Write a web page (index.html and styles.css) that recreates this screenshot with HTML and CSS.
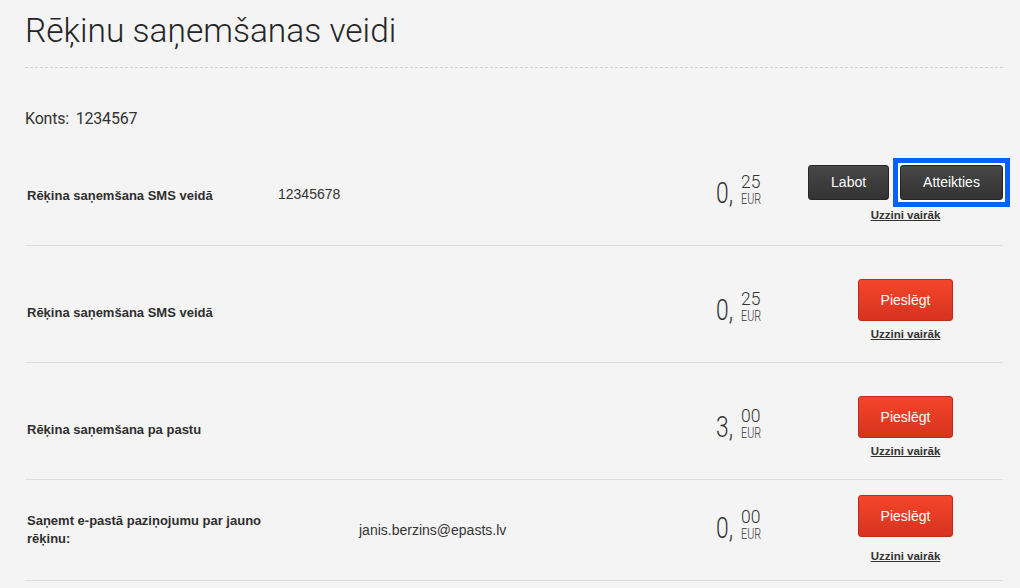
FILE: index.html
```html
<!DOCTYPE html>
<html lang="lv">
<head>
<meta charset="utf-8">
<title>Rēķinu saņemšanas veidi</title>
<link rel="stylesheet" href="styles.css">
</head>
<body>
<div class="page">
  <h1 class="title">Rēķinu saņemšanas veidi</h1>
  <div class="account">Konts: 1234567</div>

  <div class="row row--first">
    <div class="info">
      <div class="label">Rēķina saņemšana SMS veidā</div>
      <div class="value">12345678</div>
    </div>
    <div class="price">
      <span class="int">0,</span>
      <span class="frac"><span class="cents">25</span><span class="cur">EUR</span></span>
    </div>
    <div class="actions">
      <div class="btns">
        <button class="btn btn--dark">Labot</button>
        <span class="focus-ring"><button class="btn btn--dark">Atteikties</button></span>
      </div>
      <a class="more" href="#">Uzzini vairāk</a>
    </div>
  </div>

  <div class="row">
    <div class="info">
      <div class="label">Rēķina saņemšana SMS veidā</div>
    </div>
    <div class="price">
      <span class="int">0,</span>
      <span class="frac"><span class="cents">25</span><span class="cur">EUR</span></span>
    </div>
    <div class="actions">
      <div class="btns"><button class="btn btn--red">Pieslēgt</button></div>
      <a class="more" href="#">Uzzini vairāk</a>
    </div>
  </div>

  <div class="row">
    <div class="info">
      <div class="label">Rēķina saņemšana pa pastu</div>
    </div>
    <div class="price">
      <span class="int">3,</span>
      <span class="frac"><span class="cents">00</span><span class="cur">EUR</span></span>
    </div>
    <div class="actions">
      <div class="btns"><button class="btn btn--red">Pieslēgt</button></div>
      <a class="more" href="#">Uzzini vairāk</a>
    </div>
  </div>

  <div class="row row--email">
    <div class="info">
      <div class="label">Saņemt e-pastā paziņojumu par jauno rēķinu:</div>
      <div class="value">janis.berzins@epasts.lv</div>
    </div>
    <div class="price">
      <span class="int">0,</span>
      <span class="frac"><span class="cents">00</span><span class="cur">EUR</span></span>
    </div>
    <div class="actions">
      <div class="btns"><button class="btn btn--red">Pieslēgt</button></div>
      <a class="more" href="#">Uzzini vairāk</a>
    </div>
  </div>
</div>
</body>
</html>
```

FILE: styles.css
```css
* { box-sizing: border-box; }

html, body {
  margin: 0;
  padding: 0;
  background: #f4f4f4;
  color: #333;
  font-family: "Liberation Sans", Arial, sans-serif;
}

.page {
  width: 978px;
  margin-left: 25px;
}

.title {
  margin: 12px 0 0;
  padding-bottom: 16px;
  font-family: Roboto, "Liberation Sans", sans-serif;
  font-weight: 300;
  font-size: 33.5px;
  line-height: 38.7px;
  color: #262626;
  border-bottom: 1px dashed #d2d2d2;
}

.account {
  margin-top: 41px;
  font-family: Roboto, "Liberation Sans", sans-serif;
  font-size: 16px;
  line-height: 19px;
  letter-spacing: -0.2px;
  word-spacing: 3px;
  color: #333;
}

.row {
  display: flex;
  align-items: flex-start;
  height: 117px;
  border-bottom: 1px solid #dedede;
}

.row--first { margin-top: 1px; }

.row--email { height: 101px; }

.info {
  flex: 1;
  display: flex;
  align-items: flex-start;
}

.label {
  width: 253px;
  padding-left: 2px;
  margin-top: 58px;
  font-weight: bold;
  font-size: 13px;
  line-height: 18px;
  color: #2f2f2f;
}

.value {
  margin-top: 56px;
  font-size: 14px;
  line-height: 18px;
  color: #333;
}

.row--email .label {
  width: 247px;
  margin-right: 87px;
  margin-top: 32px;
}

.row--email .value { margin-top: 41px; }

.price {
  width: 45px;
  margin-right: 47px;
  margin-top: 45px;
  display: flex;
  align-items: flex-start;
  font-family: Roboto, "Liberation Sans", sans-serif;
  color: #333;
}

.row--email .price { margin-top: 29px; }

.int {
  display: inline-block;
  width: 17px;
  margin-top: 4px;
  margin-right: 8px;
  font-size: 30px;
  line-height: 30px;
  font-weight: 300;
  white-space: nowrap;
  transform: scaleX(0.76);
  transform-origin: left top;
}

.frac {
  display: flex;
  flex-direction: column;
  width: 20px;
}

.cents {
  font-size: 17.5px;
  line-height: 17px;
  font-weight: 300;
}

.cur {
  display: inline-block;
  font-size: 14px;
  line-height: 14px;
  font-weight: 300;
  margin-top: 1px;
  white-space: nowrap;
  transform: scaleX(0.77);
  transform-origin: left top;
}

.actions {
  width: 195px;
  display: flex;
  flex-direction: column;
  align-items: center;
  margin-top: 33px;
}

.row--first .actions { margin-top: 36px; }
.row--email .actions { margin-top: 15px; }

.btns {
  display: flex;
  gap: 11px;
}

.btn {
  font-family: "Liberation Sans", Arial, sans-serif;
  font-size: 14px;
  color: #fff;
  border-radius: 3px;
  padding: 0 22px;
  cursor: pointer;
}

.btn--dark {
  height: 35px;
  background: linear-gradient(#474747, #333333);
  border: 1px solid #262626;
}

.focus-ring {
  display: flex;
  margin: -7px;
  padding: 2px;
  border: 5px solid #0a5ff5;
  background: #fafafa;
}

.btn--red {
  width: 95px;
  height: 42px;
  font-size: 14px;
  padding: 0;
  background: linear-gradient(#f4452b, #d6331f);
  border: 1px solid #bf2c1a;
}

.more {
  margin-top: 6px;
  font-weight: bold;
  font-size: 11.5px;
  line-height: 14px;
  color: #333;
  text-decoration: underline;
}

.row--first .more { margin-top: 8px; }
.row--email .more { margin-top: 12px; }
```
